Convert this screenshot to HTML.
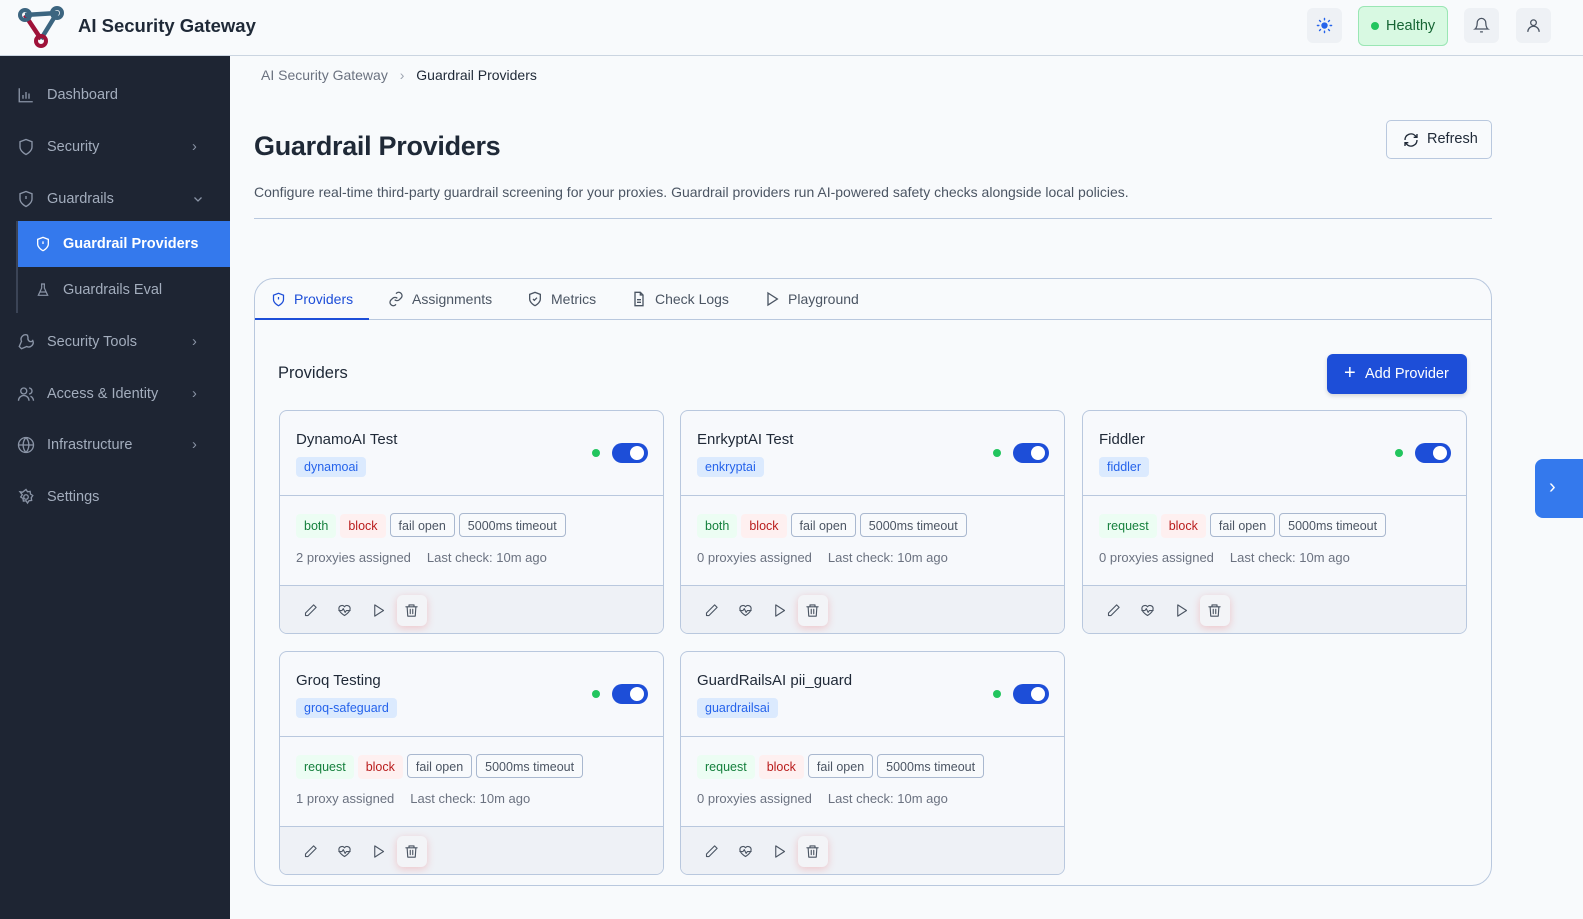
<!DOCTYPE html><html><head><style>
*{box-sizing:border-box;margin:0;padding:0}
body{width:1583px;height:919px;overflow:hidden;background:#f8fafc;font-family:"Liberation Sans",sans-serif;color:#1f2937;position:relative}
.hdr{position:absolute;left:0;top:0;width:1583px;height:56px;border-bottom:1px solid #cbd5e1;background:#f8fafc}
.side{position:absolute;left:0;top:56px;width:230px;height:863px;background:#1e2533}
.nav{position:absolute;left:0;width:230px;height:40px;display:flex;align-items:center;color:#a3adbd;font-size:14.5px}
.nav svg{position:absolute;left:17px}
.nav span{position:absolute;left:47px}
.nav .ch{position:absolute;left:192px;color:#8a94a6}
.ib{position:absolute;top:8px;width:35px;height:35px;border-radius:6px;background:#eef1f5}
.tag{display:inline-block;font-size:12.5px;padding:3px 8px;border-radius:4px;margin-right:4px;height:24px;line-height:18px}
.card{position:absolute;width:385px;height:224px;border:1px solid #b9c8de;border-radius:8px;background:#f7f9fc;overflow:hidden}
.card .t{position:absolute;left:16px;top:20px;font-size:15px;color:#1f2937}
.card .ty{position:absolute;left:16px;top:46px;background:#dbeafe;color:#2563eb;font-size:12.5px;padding:3px 8px;border-radius:4px}
.card .dot{position:absolute;left:312px;top:38px;width:8px;height:8px;border-radius:50%;background:#22c55e}
.card .sw{position:absolute;left:332px;top:32px;width:36px;height:20px;border-radius:10px;background:#1d4ed8}
.card .sw:after{content:"";position:absolute;right:4px;top:3px;width:14px;height:14px;border-radius:50%;background:#fff}
.card .mid{position:absolute;left:0;top:84px;width:100%;border-top:1px solid #b9c8de;padding:17px 16px 0}
.g{background:#ecfdf3;color:#15803d}.r{background:#fef0f0;color:#b91c1c}.o{border:1px solid #a9b8cf;color:#4b5563;background:#f8fafc}
.card .meta{font-size:13px;color:#6b7280;margin-top:12px}
.card .ft{position:absolute;left:0;top:174px;width:100%;height:50px;border-top:1px solid #b9c8de;background:#eef1f6}
.ft svg{position:absolute;top:17px}
.del{position:absolute;left:117px;top:9px;width:30px;height:31px;border-radius:6px;background:#f3f4f7;box-shadow:0 2px 8px rgba(239,68,68,.25)}
.tab{position:absolute;top:291px;font-size:14px;color:#4b5563;display:flex;align-items:center;gap:8px}
</style></head><body>
<div class="hdr">
<svg style="position:absolute;left:17px;top:5px" width="48" height="44" viewBox="0 0 48 44"><path d="M8 10 L24 34" stroke="#9f1239" stroke-width="4.5" fill="none"/><path d="M8 10 L40 8 L24 34" stroke="#3c6580" stroke-width="4.5" fill="none" stroke-linejoin="round"/><circle cx="8" cy="10" r="5" fill="none" stroke="#3c6580" stroke-width="4"/><circle cx="40" cy="8" r="5" fill="none" stroke="#3c6580" stroke-width="4"/><circle cx="24" cy="36" r="5" fill="none" stroke="#9f1239" stroke-width="4"/></svg>
<div style="position:absolute;left:78px;top:15px;font-size:18.5px;font-weight:bold;color:#1f2937">AI Security Gateway</div>
<div class="ib" style="left:1307px"><svg style="margin:9px" width="17" height="17" viewBox="0 0 24 24"><circle cx="12" cy="12" r="4.5" fill="#2563eb"/><g stroke="#2563eb" stroke-width="2" stroke-linecap="round"><path d="M12 2v2M12 20v2M2 12h2M20 12h2M5 5l1.4 1.4M17.6 17.6L19 19M5 19l1.4-1.4M17.6 6.4L19 5"/></g></svg></div>
<div style="position:absolute;left:1358px;top:6px;width:90px;height:40px;border-radius:6px;background:#d8f9e2;border:1px solid #9ae6b4;font-size:14.5px;color:#166534;line-height:38px;padding-left:27px">Healthy<span style="position:absolute;left:12px;top:15px;width:8px;height:8px;border-radius:50%;background:#22c55e"></span></div>
<div class="ib" style="left:1464px"><svg style="margin:9px" width="17" height="17" viewBox="0 0 24 24" fill="none" stroke="#4b5563" stroke-width="1.8"><path d="M6 8a6 6 0 0112 0c0 7 3 9 3 9H3s3-2 3-9M10 21h4"/></svg></div>
<div class="ib" style="left:1516px"><svg style="margin:9px" width="17" height="17" viewBox="0 0 24 24" fill="none" stroke="#4b5563" stroke-width="1.8"><circle cx="12" cy="8" r="4"/><path d="M4 21a8 8 0 0116 0"/></svg></div>
</div>
<div class="side">
<div class="nav" style="top:19px"><svg width="18" height="18" viewBox="0 0 24 24" fill="none" stroke="#8a94a6" stroke-width="1.8"><path d="M3 3v18h18M8 17v-5M12 17V8M16 17v-7"/></svg><span>Dashboard</span></div>
<div class="nav" style="top:71px"><svg width="18" height="18" viewBox="0 0 24 24" fill="none" stroke="#8a94a6" stroke-width="1.8"><path d="M12 22s8-4 8-10V5l-8-3-8 3v7c0 6 8 10 8 10z"/></svg><span>Security</span><span class="ch">›</span></div>
<div class="nav" style="top:123px"><svg width="18" height="18" viewBox="0 0 24 24" fill="none" stroke="#8a94a6" stroke-width="1.8"><path d="M12 22s8-4 8-10V5l-8-3-8 3v7c0 6 8 10 8 10zM12 8v4M12 16h.01"/></svg><span>Guardrails</span><svg style="left:192px" width="12" height="12" viewBox="0 0 24 24" fill="none" stroke="#8a94a6" stroke-width="2.5"><path d="M5 9l7 7 7-7"/></svg></div>
<div style="position:absolute;left:16px;top:165px;width:2px;height:92px;background:#3b4456"></div>
<div class="nav" style="top:165px;left:18px;width:212px;height:46px;background:#3479ed;color:#fff;font-weight:bold"><svg style="left:17px" width="16" height="16" viewBox="0 0 24 24" fill="none" stroke="#fff" stroke-width="2"><path d="M12 22s8-4 8-10V5l-8-3-8 3v7c0 6 8 10 8 10zM12 8v4M12 16h.01"/></svg><span style="left:45px">Guardrail Providers</span></div>
<div class="nav" style="top:214px;left:18px;width:212px"><svg style="left:17px" width="16" height="16" viewBox="0 0 24 24" fill="none" stroke="#8a94a6" stroke-width="1.8"><path d="M9 3h6M10 3v6L5 20h14L14 9V3M7 15h10"/></svg><span style="left:45px">Guardrails Eval</span></div>
<div class="nav" style="top:266px"><svg width="18" height="18" viewBox="0 0 24 24" fill="none" stroke="#8a94a6" stroke-width="1.8"><path d="M14.7 6.3a4 4 0 005 5L21 10a6 6 0 01-8 8L6 21l-3-3 3-7a6 6 0 018-8z"/></svg><span>Security Tools</span><span class="ch">›</span></div>
<div class="nav" style="top:318px"><svg width="18" height="18" viewBox="0 0 24 24" fill="none" stroke="#8a94a6" stroke-width="1.8"><circle cx="9" cy="8" r="4"/><path d="M2 21a7 7 0 0114 0M16 4a4 4 0 010 8M22 21a7 7 0 00-4-6"/></svg><span>Access &amp; Identity</span><span class="ch">›</span></div>
<div class="nav" style="top:369px"><svg width="18" height="18" viewBox="0 0 24 24" fill="none" stroke="#8a94a6" stroke-width="1.8"><circle cx="12" cy="12" r="10"/><path d="M2 12h20M12 2a15 15 0 010 20M12 2a15 15 0 000 20"/></svg><span>Infrastructure</span><span class="ch">›</span></div>
<div class="nav" style="top:421px"><svg width="18" height="18" viewBox="0 0 24 24" fill="none" stroke="#8a94a6" stroke-width="1.8"><circle cx="12" cy="12" r="3"/><path d="M12 2l2 3 3.5-.5.5 3.5 3 2-2 3 .5 3.5-3.5.5-2 3-2-3-3.5.5-.5-3.5-3-2 2-3L4 5l3.5.5z"/></svg><span>Settings</span></div>
</div>
<div style="position:absolute;left:261px;top:67px;font-size:14px;color:#6b7280">AI Security Gateway <span style="margin:0 8px;color:#9ca3af">›</span> <span style="color:#1f2937">Guardrail Providers</span></div>
<div style="position:absolute;left:254px;top:131px;font-size:27px;font-weight:bold;color:#1f2937;letter-spacing:-.3px">Guardrail Providers</div>
<div style="position:absolute;left:1386px;top:120px;width:106px;height:39px;border:1px solid #b9c8de;border-radius:5px;font-size:14.5px;line-height:37px;padding-left:40px;color:#1f2937">Refresh<svg style="position:absolute;left:16px;top:11px" width="16" height="16" viewBox="0 0 24 24" fill="none" stroke="#1f2937" stroke-width="2"><path d="M21 12a9 9 0 01-15.5 6.3L3 16M3 12A9 9 0 0118.5 5.7L21 8M21 3v5h-5M3 21v-5h5"/></svg></div>
<div style="position:absolute;left:254px;top:184px;font-size:14px;color:#4b5563">Configure real-time third-party guardrail screening for your proxies. Guardrail providers run AI-powered safety checks alongside local policies.</div>
<div style="position:absolute;left:254px;top:218px;width:1238px;height:1px;background:#b9c8de"></div>
<div style="position:absolute;left:254px;top:278px;width:1238px;height:608px;border:1px solid #b9c8de;border-radius:20px"></div>
<div style="position:absolute;left:255px;top:319px;width:1236px;height:1px;background:#b9c8de"></div>
<div style="position:absolute;left:255px;top:318px;width:114px;height:2px;background:#1d4ed8"></div>
<div class="tab" style="left:271px;color:#1d4ed8"><svg width="15" height="15" viewBox="0 0 24 24" fill="none" stroke="#1d4ed8" stroke-width="2"><path d="M12 22s8-4 8-10V5l-8-3-8 3v7c0 6 8 10 8 10zM12 8v4M12 16h.01"/></svg>Providers</div>
<div class="tab" style="left:388px"><svg width="16" height="16" viewBox="0 0 24 24" fill="none" stroke="#4b5563" stroke-width="2"><path d="M10 13a5 5 0 007 0l3-3a5 5 0 00-7-7l-1 1M14 11a5 5 0 00-7 0l-3 3a5 5 0 007 7l1-1"/></svg>Assignments</div>
<div class="tab" style="left:527px"><svg width="16" height="16" viewBox="0 0 24 24" fill="none" stroke="#4b5563" stroke-width="2"><path d="M12 22s8-4 8-10V5l-8-3-8 3v7c0 6 8 10 8 10zM9 12l2 2 4-4"/></svg>Metrics</div>
<div class="tab" style="left:631px"><svg width="16" height="16" viewBox="0 0 24 24" fill="none" stroke="#4b5563" stroke-width="2"><path d="M14 2H6v20h12V6zM14 2v4h4M9 13h6M9 17h6"/></svg>Check Logs</div>
<div class="tab" style="left:764px"><svg width="16" height="16" viewBox="0 0 24 24" fill="none" stroke="#4b5563" stroke-width="2"><path d="M6 3l14 9-14 9z"/></svg>Playground</div>
<div style="position:absolute;left:278px;top:364px;font-size:16.5px;color:#1f2937">Providers</div>
<div style="position:absolute;left:1327px;top:354px;width:140px;height:40px;border-radius:6px;background:#1d4ed8;color:#fff;font-size:14.5px;line-height:40px;padding-left:38px;box-shadow:0 2px 4px rgba(0,0,0,.15)"><span style="position:absolute;left:17px;top:-1px;font-size:20px">+</span>Add Provider</div>
<div style="position:absolute;left:1535px;top:459px;width:48px;height:59px;border-radius:8px 0 0 8px;background:#3479ed;color:#fff;font-size:20px;line-height:57px;padding-left:14px">›</div>

<div id="c"></div>
<script>
const cards=[[279,410,"DynamoAI Test","dynamoai","both","2 proxyies assigned"],[680,410,"EnrkyptAI Test","enkryptai","both","0 proxyies assigned"],[1082,410,"Fiddler","fiddler","request","0 proxyies assigned"],[279,651,"Groq Testing","groq-safeguard","request","1 proxy assigned"],[680,651,"GuardRailsAI pii_guard","guardrailsai","request","0 proxyies assigned"]];
const ic='fill="none" stroke="#4b5563" stroke-width="1.8" stroke-linecap="round" stroke-linejoin="round"';
let h='';
for(const c of cards){h+=`<div class="card" style="left:${c[0]}px;top:${c[1]}px"><div class="t">${c[2]}</div><div class="ty">${c[3]}</div><div class="dot"></div><div class="sw"></div>
<div class="mid"><span class="tag g">${c[4]}</span><span class="tag r">block</span><span class="tag o">fail open</span><span class="tag o">5000ms timeout</span><div class="meta">${c[5]}<span style="display:inline-block;width:16px"></span>Last check: 10m ago</div></div>
<div class="ft"><svg style="left:23px" width="15" height="15" viewBox="0 0 24 24" ${ic}><path d="M17 3l4 4L8 20H4v-4z"/></svg><svg style="left:57px" width="15" height="15" viewBox="0 0 24 24" ${ic}><path d="M12 20s-9-5-9-11a5 5 0 019-3 5 5 0 019 3c0 6-9 11-9 11zM3 12h5l2-3 3 6 2-3h6"/></svg><svg style="left:91px" width="15" height="15" viewBox="0 0 24 24" ${ic}><path d="M6 3l14 9-14 9z"/></svg><div class="del"></div><svg style="left:124px" width="15" height="15" viewBox="0 0 24 24" ${ic}><path d="M3 6h18M8 6V3h8v3M5 6l1 15h12l1-15M10 10v7M14 10v7"/></svg></div></div>`}
document.getElementById('c').innerHTML=h;
</script>
</body></html>
